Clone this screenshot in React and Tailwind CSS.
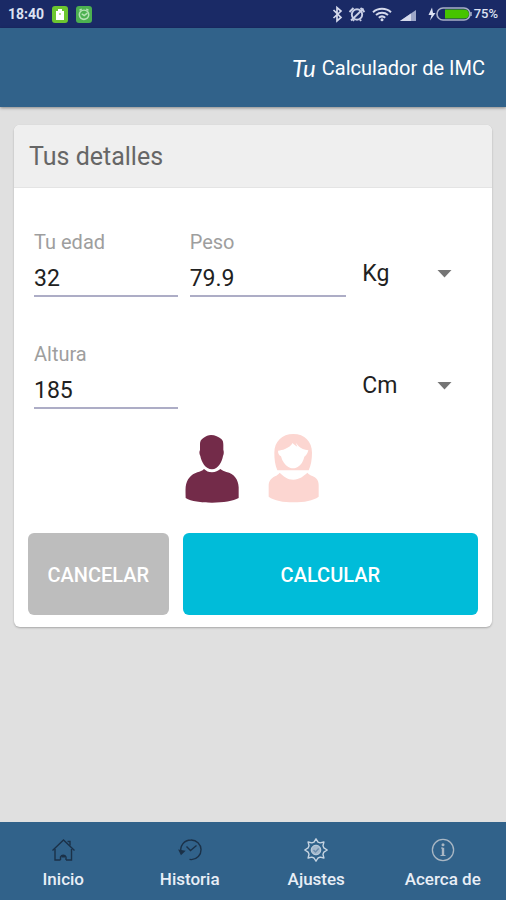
import React, { useState } from "react";

const StatusBar = () => {
  return (
    <div className="h-7 bg-[#1a2a66] text-[#dde2f2] px-2 flex items-center justify-between">
      <div className="flex items-center gap-2">
        <span className="text-sm font-bold">18:40</span>
        <svg className="w-4 h-[17px]" viewBox="0 0 16 17" aria-hidden="true">
          <rect width="16" height="17" rx="3" fill="#6cc630" />
          <path d="M6 3h4v2h2v9H4V5h2z" fill="#fff" />
          <path d="M7 7h2v2H7z" fill="#b5e08f" />
        </svg>
        <svg className="w-4 h-[17px]" viewBox="0 0 16 17" aria-hidden="true">
          <rect width="16" height="17" rx="3" fill="#4cb050" />
          <g fill="none" stroke="#b4e2b4" strokeWidth="1.500" strokeLinecap="round">
            <path d="M4.500 5.500c2-1.800 5-1.800 7 0 1.800 2 1.600 5-.3 6.600-2 1.500-4.700 1.400-6.400 0-1.900-1.800-1.900-4.800-.3-6.600z" />
            <path d="M6.200 8.200l2 1.400 2.800-2.200M4 4l1.200-.6M12 4l-1.200-.6" />
          </g>
        </svg>
      </div>
      <div className="flex items-center">
        <svg className="w-24 h-5" viewBox="0 0 96 20" aria-hidden="true">
          <path
            d="M1.500 6l7.500 7.500-4 3.500V3.500L9 7l-7.500 7"
            fill="none"
            stroke="#d5daec"
            strokeWidth="1.700"
          />
          <g fill="none" stroke="#c9cfe6" strokeWidth="1.900">
            <circle cx="25" cy="10.500" r="5.200" />
            <path d="M19 16.500L31.500 4.500" />
            <path d="M17.500 8L21.500 4M28.500 4l4 4M22 15.500l-1 1.500M28 15.500l1 1.500" />
          </g>
          <g fill="none" stroke="#d5daec" strokeWidth="2">
            <path d="M41 8.200c5-4.500 13-4.500 18 0" />
            <path d="M44 11c3.500-3 8.500-3 12 0" />
            <path d="M46.800 13.700c2-1.700 4.400-1.700 6.400 0" />
          </g>
          <circle cx="50" cy="15.700" r="1.500" fill="#d5daec" />
          <path d="M68 17L84 6v11z" fill="#9da7c8" />
          <path d="M68 17l11-7.500V17z" fill="#d5daec" />
        </svg>
        <svg className="w-[46px] h-5" viewBox="0 0 46 20" aria-hidden="true">
          <path d="M4 3.500L.5 11h3L2 16.500 7.500 9H5z" fill="#dde2f2" />
          <rect x="9" y="4" width="33" height="12" rx="6" fill="#1a2a66" stroke="#a9b0c8" strokeWidth="1.600" />
          <path d="M17 5.500h19.500a4.500 4.500 0 0 1 0 9H17z" fill="#46c400" />
          <path d="M43 8v4" stroke="#a9b0c8" strokeWidth="1.500" />
        </svg>
        <span className="text-[13px] font-medium">75%</span>
      </div>
    </div>
  );
};

const NumberField = ({ id, label, value, onChange }) => {
  return (
    <div className="flex flex-col">
      <label htmlFor={id} className="text-xl leading-7 text-[#9e9e9e]">
        {label}
      </label>
      <input
        id={id}
        type="text"
        inputMode="decimal"
        value={value}
        onChange={(e) => onChange(e.target.value)}
        className="w-full h-[41px] pt-1.5 text-[23px] text-[#212121] border-b-2 border-[#adadc6] outline-none"
      />
    </div>
  );
};

const UnitSelect = ({ label, value, options, onChange }) => {
  return (
    <div className="pt-7">
      <div className="relative">
        <select
          aria-label={label}
          value={value}
          onChange={(e) => onChange(e.target.value)}
          className="appearance-none w-full h-9 pl-1 text-[23px] leading-9 text-[#212121] bg-transparent outline-none"
        >
          {options.map((option) => (
            <option key={option} value={option}>
              {option}
            </option>
          ))}
        </select>
        <svg
          className="absolute right-5 top-3 w-4 h-3 pointer-events-none"
          viewBox="0 0 16 12"
          aria-hidden="true"
        >
          <path d="M1.500 2h14L8.500 9.500z" fill="#757575" />
        </svg>
      </div>
    </div>
  );
};

const ManIcon = () => (
  <svg className="w-14 h-[70px]" viewBox="45 27 168 210" aria-hidden="true">
    <path
      d="M93 60c0-8 3-13 10-18 8-6 15-9 23-9 12 0 23 6 31 12 5 5 6 10 6 18v14c2 6 2 13-1 19-3 17-14 40-33 40s-32-22-35-40c-3-6-4-12-1-18z"
      fill="#732b49"
    />
    <path
      d="M105 135c7 6 13 10 24 10s18-5 25-10c5 4 11 7 18 9 24 5 36 23 37 46v32c-16 9-46 14-80 14s-62-4-79-14c0-10-1-24 0-34 3-22 16-37 35-43 8-2 15-5 20-10z"
      fill="#732b49"
    />
  </svg>
);

const WomanIcon = () => (
  <svg className="w-14 h-[70px]" viewBox="290 24 168 210" aria-hidden="true">
    <path
      fillRule="evenodd"
      d="M372 27c34 0 56 23 56 56 0 20-3 38-10 53h-94c-7-16-9-33-9-53 0-33 23-56 57-56zM326 77c0 9 3 14 9 17 4 16 12 26 22 32 8 5 20 5 28 0 10-6 17-17 20-31 6-4 10-10 12-19-12-1-22-5-29-12l-9-11 5 12c-7-4-11-7-14-11-4 8-13 14-23 18-7 3-14 4-21 5z"
      fill="#fcd6d1"
    />
    <path
      d="M331 143c11 10 23 21 41 21s32-12 42-21c5 5 9 8 15 10 13 5 19 14 19 27v35c-17 12-43 17-75 17s-58-5-75-17v-33c0-13 7-22 19-28 6-3 10-6 14-11z"
      fill="#fcd6d1"
    />
  </svg>
);

const HomeIcon = () => (
  <svg className="w-6 h-6" viewBox="0 0 24 24" fill="none" stroke="#1b3148" strokeWidth="1.400" aria-hidden="true">
    <path d="M1.500 12.500L12.500 2l11 10.500" />
    <path d="M16.500 3.500h2.500v4M4 11v11h5.500M20.500 11v11H15" />
    <path d="M9.500 22v-3a3 3 0 0 1 5.500 0v3" />
    <path d="M10.500 18.500h3.500" strokeWidth="2" />
  </svg>
);

const HistoryIcon = () => (
  <svg className="w-6 h-6" viewBox="0 0 24 24" fill="none" stroke="#1b3148" strokeWidth="1.400" aria-hidden="true">
    <path d="M3 15C1.500 8 6 2 13 2a9.800 9.800 0 0 1 .5 19.600l-2-.2" />
    <path d="M1.500 12.500l1.700 3.500 2.800-2.700z" strokeWidth="1.600" fill="#1b3148" />
    <path d="M8.500 8.500l4 4L18.500 7.500" />
  </svg>
);

const GearIcon = () => (
  <svg className="w-6 h-6" viewBox="0 0 24 24" fill="none" stroke="#c6d4e2" strokeWidth="1.400" strokeLinejoin="round" aria-hidden="true">
    <path d="M12 .8l2 3.300 2.200.8 3.700-.9-.9 3.700.9 2.200 3.300 2.100-3.300 2.100-.9 2.200.9 3.700-3.700-.9-2.200.9-2 3.200-2-3.200-2.200-.9-3.700.9.900-3.700-.9-2.200L.8 12l3.300-2.100.9-2.200L4.100 4l3.700.9 2.200-.8z" />
    <circle cx="12" cy="12" r="4.800" fill="#a4b8cc" strokeWidth="1" />
    <path d="M9.500 12l2 2 3.200-3.500" stroke="#6c8dac" />
  </svg>
);

const InfoIcon = () => (
  <svg className="w-6 h-6" viewBox="0 0 24 24" fill="none" stroke="#a9b7c4" aria-hidden="true">
    <circle cx="12" cy="12" r="10.600" strokeWidth="1.300" />
    <path d="M12 9.800v7.700" strokeWidth="2.400" />
    <path d="M10 10h2M9.500 17.500h5" strokeWidth="1" />
    <circle cx="12" cy="6.800" r="1.500" fill="#a9b7c4" stroke="none" />
  </svg>
);

const navItems = [
  { label: "Inicio", icon: <HomeIcon /> },
  { label: "Historia", icon: <HistoryIcon /> },
  { label: "Ajustes", icon: <GearIcon /> },
  { label: "Acerca de", icon: <InfoIcon /> },
];

const App = () => {
  const [age, setAge] = useState("32");
  const [weight, setWeight] = useState("79.9");
  const [height, setHeight] = useState("185");
  const [weightUnit, setWeightUnit] = useState("Kg");
  const [heightUnit, setHeightUnit] = useState("Cm");
  const [gender, setGender] = useState("male");

  return (
    <div className="min-h-screen flex flex-col bg-[#e0e0e0] font-[Roboto,sans-serif]">
      <StatusBar />
      <header className="h-[79px] bg-[#31628a] text-white flex items-center justify-end gap-1.5 px-[21px] shadow-[0_1px_3px_rgba(0,0,0,0.4)]">
        <span className="font-[Lato,sans-serif] italic text-2xl">Tu</span>
        <h1 className="text-xl">Calculador de IMC</h1>
      </header>

      <main className="flex-1 px-3.5 pt-[18px] pb-6">
        <form
          className="bg-white rounded-md shadow-[0_1px_2px_rgba(0,0,0,0.25)] overflow-hidden"
          onSubmit={(e) => e.preventDefault()}
        >
          <h2 className="h-[63px] px-[15px] pt-0.5 flex items-center bg-[#efefef] border-b border-[#e4e4e4] text-[25px] text-[#666666]">
            Tus detalles
          </h2>

          <div className="px-5 pt-10 flex flex-col gap-[43px]">
            <div className="grid grid-cols-[144fr_157fr_114fr] gap-3">
              <NumberField id="age" label="Tu edad" value={age} onChange={setAge} />
              <NumberField id="weight" label="Peso" value={weight} onChange={setWeight} />
              <UnitSelect
                label="Unidad de peso"
                value={weightUnit}
                options={["Kg", "Lb"]}
                onChange={setWeightUnit}
              />
            </div>
            <div className="grid grid-cols-[144fr_157fr_114fr] gap-3">
              <NumberField id="height" label="Altura" value={height} onChange={setHeight} />
              <div></div>
              <UnitSelect
                label="Unidad de altura"
                value={heightUnit}
                options={["Cm", "In"]}
                onChange={setHeightUnit}
              />
            </div>
          </div>

          <div className="mt-6 flex justify-center gap-[26px]">
            <button
              type="button"
              aria-label="Hombre"
              aria-pressed={gender === "male"}
              onClick={() => setGender("male")}
            >
              <ManIcon />
            </button>
            <button
              type="button"
              aria-label="Mujer"
              aria-pressed={gender === "female"}
              onClick={() => setGender("female")}
            >
              <WomanIcon />
            </button>
          </div>

          <div className="mt-[30px] px-3.5 pb-3 grid grid-cols-[141fr_296fr] gap-3.5 text-xl font-medium text-white">
            <button type="button" className="h-[82px] pt-0.5 rounded-md bg-[#bdbdbd]">
              CANCELAR
            </button>
            <button type="submit" className="h-[82px] pt-0.5 rounded-md bg-[#00bcd9]">
              CALCULAR
            </button>
          </div>
        </form>
      </main>

      <nav className="h-[78px] bg-[#31628a] grid grid-cols-4">
        {navItems.map((item) => (
          <a
            key={item.label}
            href="#"
            className="flex flex-col items-center pt-4 gap-[3px] text-[17px] leading-7 font-medium text-[#e8eef6]"
          >
            {item.icon}
            {item.label}
          </a>
        ))}
      </nav>
    </div>
  );
};

export default App;
